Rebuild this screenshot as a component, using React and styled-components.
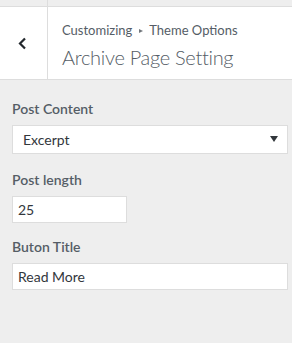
import React from 'react';
import styled, { createGlobalStyle } from 'styled-components';

const GlobalStyle = createGlobalStyle`
  html, body {
    margin: 0;
    padding: 0;
    background: #eeeeee;
    font-family: Lato, "Open Sans", sans-serif;
    color: #555d66;
  }
`;

function App() {
  return (
    <Panel>
      <GlobalStyle />
      <TopStrip>
        <StripSide />
      </TopStrip>
      <Header>
        <BackButton type="button" aria-label="Back">
          <svg width="10" height="13" viewBox="0 0 10 13">
            <path d="M8 1.5 L3 6.5 L8 11.5" fill="none" stroke="#23282d" strokeWidth="2.2" />
          </svg>
        </BackButton>
        <TitleBlock>
          <Crumb>
            Customizing
            <CrumbArrow aria-hidden="true" />
            Theme Options
          </Crumb>
          <Title>Archive Page Setting</Title>
        </TitleBlock>
      </Header>

      <Controls>
        <Field>
          <Label>Post Content</Label>
          <SelectWrap>
            <Select defaultValue="excerpt">
              <option value="excerpt">Excerpt</option>
              <option value="full">Full Content</option>
            </Select>
            <Arrow width="8" height="7" viewBox="0 0 8 7">
              <path d="M0 0 H8 L4 6 Z" fill="#32373c" />
            </Arrow>
          </SelectWrap>
        </Field>
        <Field>
          <Label>Post length</Label>
          <TextInput $width="115px" defaultValue="25" />
        </Field>
        <Field>
          <Label>Buton Title</Label>
          <TextInput defaultValue="Read More" />
        </Field>
      </Controls>
    </Panel>
  );
}

export default App;

const Panel = styled.div`
  width: 292px;
  height: 343px;
  background: #eeeeee;
  overflow: hidden;
`;

const TopStrip = styled.div`
  height: 6px;
  display: flex;
`;

const StripSide = styled.div`
  width: 47px;
  border-right: 1px solid #dddddd;
`;

const Header = styled.div`
  display: flex;
  height: 72px;
  background: #ffffff;
  border-top: 1px solid #dddddd;
  border-bottom: 1px solid #dddddd;
`;

const BackButton = styled.button`
  width: 48px;
  flex: none;
  border: none;
  border-right: 1px solid #dddddd;
  background: #ffffff;
  display: flex;
  align-items: center;
  justify-content: center;
  padding: 0 3px 0 0;
  margin: 0;
`;

const TitleBlock = styled.div`
  display: flex;
  flex-direction: column;
  padding: 14px 0 0 14px;
`;

const Crumb = styled.span`
  display: flex;
  align-items: center;
  font-size: 13px;
  line-height: 18px;
  color: #555d66;
`;

const CrumbArrow = styled.span`
  width: 0;
  height: 0;
  margin: 1px 6px 0 7px;
  border-top: 2.5px solid transparent;
  border-bottom: 2.5px solid transparent;
  border-left: 4px solid #72777c;
`;

const Title = styled.h3`
  margin: 5px 0 0;
  font-size: 20px;
  line-height: 26px;
  font-weight: 300;
  letter-spacing: -0.3px;
  color: #555d66;
`;

const Controls = styled.div`
  display: flex;
  flex-direction: column;
  gap: 14px;
  padding: 19px 4px 0 12px;
`;

const Field = styled.div`
  display: flex;
  flex-direction: column;
  gap: 6px;
`;

const Label = styled.label`
  font-size: 14px;
  line-height: 20px;
  font-weight: 600;
  color: #555d66;
`;

const SelectWrap = styled.div`
  position: relative;
  margin-bottom: 2px;
`;

const Select = styled.select`
  appearance: none;
  width: 100%;
  height: 29px;
  box-sizing: border-box;
  margin: 0;
  padding: 0 24px 0 10px;
  border: 1px solid #dddddd;
  border-radius: 0;
  background: #ffffff;
  font-family: inherit;
  font-size: 14px;
  color: #32373c;
  outline: none;
`;

const Arrow = styled.svg`
  position: absolute;
  right: 10px;
  top: 11px;
  pointer-events: none;
`;

const TextInput = styled.input`
  width: ${p => p.$width || '100%'};
  height: 27px;
  box-sizing: border-box;
  margin: 0;
  padding: 0 5px;
  border: 1px solid #dddddd;
  border-radius: 0;
  background: #ffffff;
  font-family: inherit;
  font-size: 14px;
  color: #32373c;
  outline: none;
`;
